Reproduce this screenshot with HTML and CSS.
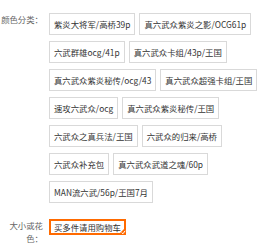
FILE: index.html
```html
<!DOCTYPE html>
<html lang="zh-CN">
<head>
    <meta charset="UTF-8">
    <title>颜色分类</title>
    <link rel="stylesheet" href="styles.css">
</head>
<body>
    <div class="sku">
        <dl class="prop">
            <dt>颜色分类：</dt>
            <dd>
                <ul class="options">
                    <li><a href="#">紫炎大将军/高桥39p</a></li>
                    <li><a href="#">真六武众紫炎之影/OCG61p</a></li>
                    <li><a href="#">六武群雄ocg/41p</a></li>
                    <li><a href="#">真六武众卡组/43p/王国</a></li>
                    <li><a href="#">真六武众紫炎秘传/ocg/43</a></li>
                    <li><a href="#">真六武众超强卡组/王国</a></li>
                    <li><a href="#">速攻六武众/ocg</a></li>
                    <li><a href="#">真六武众紫炎秘传/王国</a></li>
                    <li><a href="#">六武众之真兵法/王国</a></li>
                    <li><a href="#">六武众的归来/高桥</a></li>
                    <li><a href="#">六武众补充包</a></li>
                    <li><a href="#">真六武众武道之魂/60p</a></li>
                    <li><a href="#">MAN流六武/56p/王国7月</a></li>
                </ul>
            </dd>
        </dl>
        <dl class="prop size">
            <dt>大小或花色：</dt>
            <dd>
                <ul class="options">
                    <li class="selected">
                        <a href="#">买多件请用购物车</a>
                        <svg class="tick" width="8" height="8" viewBox="0 0 8 8">
                            <path d="M8 0V8H0Z" fill="#ff6a00"/>
                            <path d="M3.6 5.6L4.9 6.8L7.2 3.8" stroke="#fff" stroke-width="1" fill="none"/>
                        </svg>
                    </li>
                </ul>
            </dd>
        </dl>
    </div>
</body>
</html>
```

FILE: styles.css
```css
body {
    margin: 0;
    font-family: "Noto Sans CJK SC", "Liberation Sans", sans-serif;
    font-size: 8.4px;
    color: #333;
    background: #fff;
}
.sku {
    padding: 13px 0 0 0;
    width: 265px;
}
.prop {
    display: flex;
    margin: 0;
}
.prop dt {
    width: 43px;
    flex-shrink: 0;
    text-align: right;
    color: #666;
    line-height: 13px;
    padding-top: 0;
}
.prop dd {
    margin: 0 0 0 6px;
    flex: 1;
}
.options {
    list-style: none;
    margin: 0;
    padding: 0;
    display: flex;
    flex-wrap: wrap;
    column-gap: 4px;
    row-gap: 6px;
}
.options li {
    position: relative;
}
.options a {
    display: block;
    border: 1px solid #d9d9d9;
    padding: 0 4px;
    line-height: 20px;
    color: #333;
    text-decoration: none;
    white-space: nowrap;
}
.size {
    margin-top: 16px;
}
.size dt {
    padding-top: 0;
}
.options .selected a {
    border: 2px solid #ff6a00;
    line-height: 12px;
    padding: 0 3px;
}
.tick {
    position: absolute;
    right: 0;
    bottom: 0;
    display: block;
}
```
